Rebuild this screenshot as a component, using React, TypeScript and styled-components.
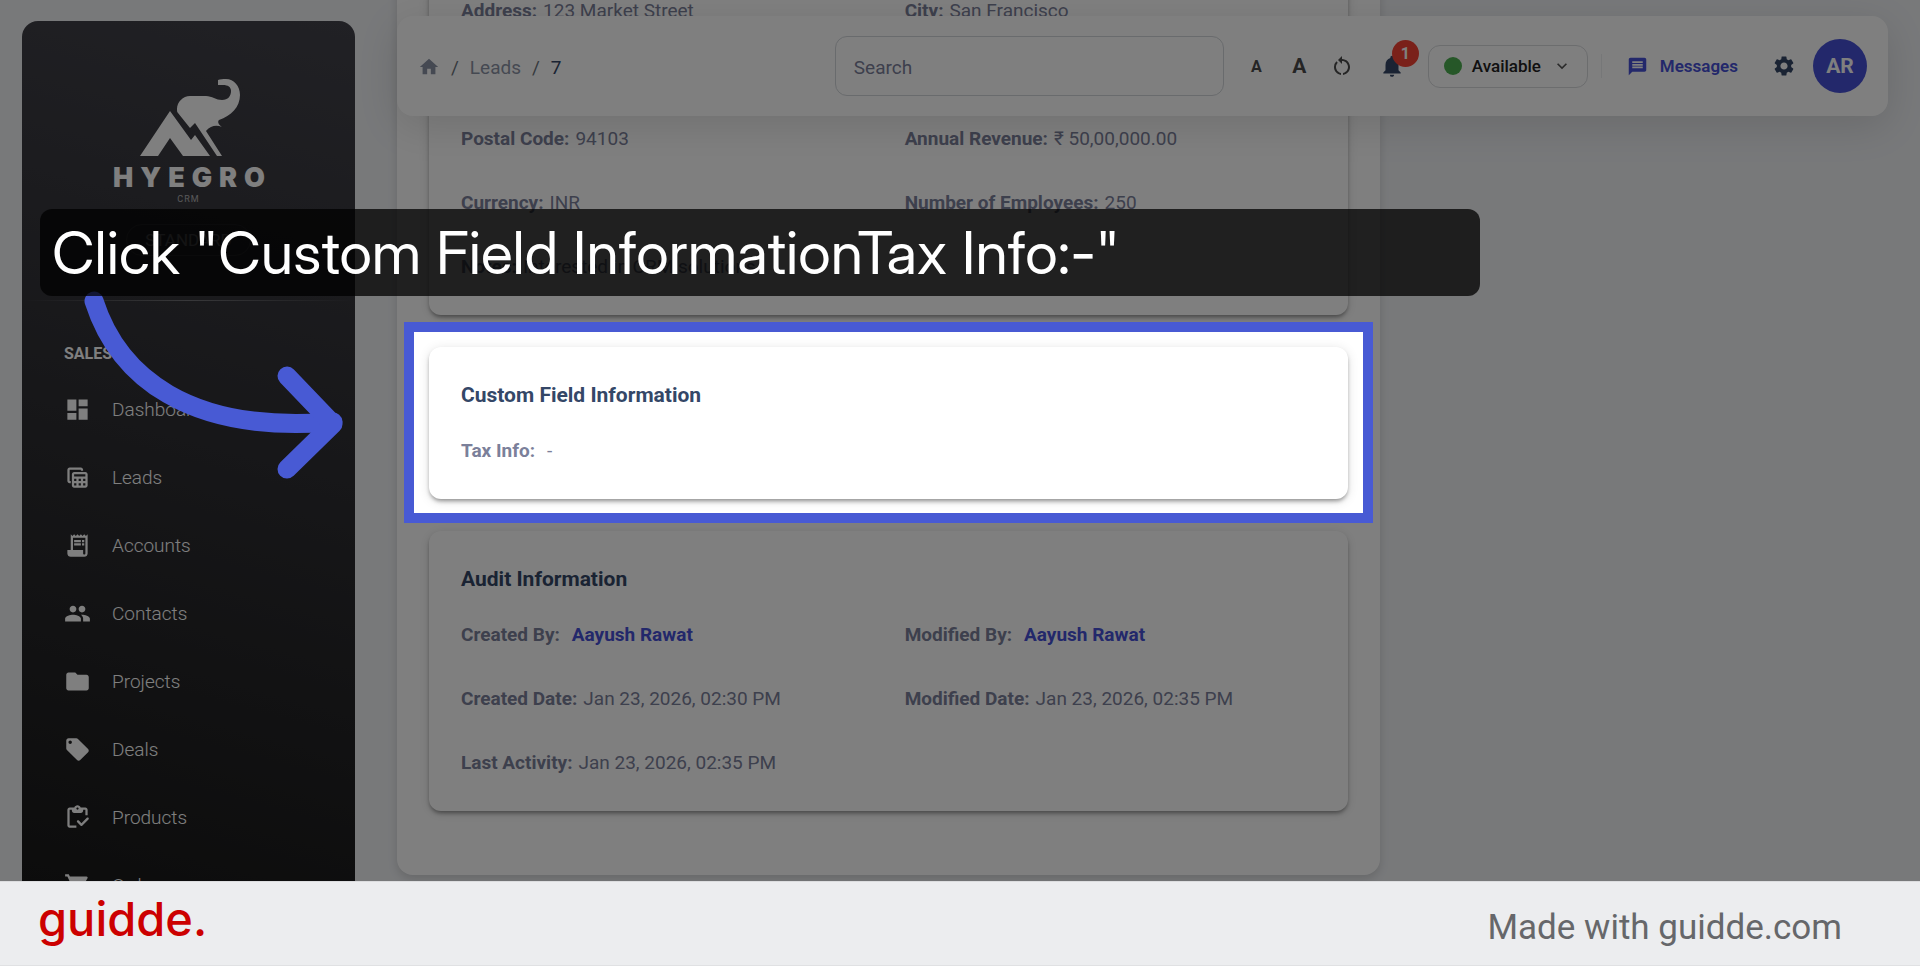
import React from "react";
import styled, { createGlobalStyle } from "styled-components";
import {
  MdDashboard,
  MdFolder,
  MdHome,
  MdKeyboardArrowDown,
  MdLocalOffer,
  MdMessage,
  MdNotifications,
  MdPeople,
  MdReceiptLong,
  MdRestartAlt,
  MdSettings,
  MdShoppingCart,
  MdTableView,
} from "react-icons/md";

const INK = "#344767";
const MUTED = "#7b809a";
const ACCENT = "#4650d6";
const MARKER = "#485ad4";

const GlobalStyle = createGlobalStyle`
  *, *::before, *::after { box-sizing: border-box; }
  body {
    margin: 0;
    background: #f0f2f5;
    font-family: Roboto, "Open Sans", sans-serif;
  }
  a { color: inherit; text-decoration: none; }
  button { font: inherit; color: inherit; border: 0; background: none; padding: 0; cursor: pointer; }
`;

const Page = styled.div`
  display: flex;
  flex-direction: column;
  height: 100vh;
`;

const Stage = styled.div`
  position: relative;
  display: flex;
  flex: 1;
  min-height: 0;
  overflow: hidden;
  background: #f0f2f5;
`;

/* ---------- sidebar ---------- */

const Sidebar = styled.aside`
  flex: none;
  width: 333px;
  margin: 21px 0 0 22px;
  border-radius: 16px 16px 0 0;
  background: linear-gradient(195deg, #42424a, #191919);
  color: #fff;
  overflow: hidden;
`;

const Brand = styled.div`
  display: flex;
  flex-direction: column;
  align-items: center;
  height: 279px;
  padding-top: 58px;
`;

const BrandName = styled.div`
  margin-top: 5px;
  padding-left: 8px;
  font: 900 27px/32px Inter, sans-serif;
  letter-spacing: 7px;
`;

const BrandSub = styled.div`
  font-size: 9px;
  line-height: 10px;
  letter-spacing: 1px;
  opacity: 0.6;
`;

const Plan = styled.div`
  margin-top: 20px;
  padding: 0 18px;
  border: 1px solid rgba(255, 255, 255, 0.3);
  border-radius: 16px;
  font-size: 17px;
  line-height: 30px;
  opacity: 0.5;
`;

const Divider = styled.hr`
  width: 100%;
  height: 1px;
  margin: 0;
  border: 0;
  background: linear-gradient(to right, transparent, rgba(255, 255, 255, 0.3), transparent);
`;

const NavHeading = styled.h2`
  margin: 41px 0 9px;
  padding-left: 42px;
  font-size: 16px;
  font-weight: 700;
  line-height: 24px;
`;

const NavItem = styled.a`
  display: flex;
  align-items: center;
  gap: 21px;
  height: 68px;
  padding-left: 42px;
  font-size: 19px;
  font-weight: 300;

  svg { width: 27px; height: 27px; }
`;

/* ---------- top bar ---------- */

const Main = styled.main`
  position: relative;
  flex: 1;
  min-width: 0;
  margin: 0 32px 0 42px;
  display: flex;
  flex-direction: column;
  justify-content: flex-end;
  padding-bottom: 6px;
`;

const TopBar = styled.header`
  position: absolute;
  z-index: 2;
  top: 16px;
  left: 0;
  right: 0;
  display: flex;
  align-items: center;
  height: 100px;
  padding: 0 21px;
  border-radius: 16px;
  background: #fff;
  box-shadow: 0 10px 40px rgba(0, 0, 0, 0.12);
  color: ${INK};
`;

const Crumbs = styled.nav`
  display: flex;
  align-items: center;
  gap: 11px;
  margin-right: auto;
  padding-top: 2px;
  font-size: 19px;
  color: #6c757d;

  svg { display: block; width: 22px; height: 22px; }
  a { color: #8b93a5; }
  strong { font-weight: 400; color: ${INK}; }
`;

const Search = styled.input`
  width: 389px;
  height: 60px;
  margin-right: 11px;
  padding: 2px 18px 0;
  border: 1px solid #d2d6da;
  border-radius: 12px;
  background: #fff;
  font: 400 19px Roboto, sans-serif;
  &::placeholder { color: ${MUTED}; opacity: 1; }
`;

const IconButton = styled.button<{ $size: number }>`
  position: relative;
  display: flex;
  align-items: center;
  justify-content: center;
  width: 43px;
  height: 43px;
  font-size: ${(p) => p.$size}px;
  font-weight: 700;
  color: #4a4a4a;
`;

const BellButton = styled(IconButton)`
  margin-left: 7px;
  color: ${INK};
`;

const Badge = styled.span`
  position: absolute;
  top: -5px;
  left: 21px;
  width: 27px;
  height: 27px;
  border-radius: 50%;
  background: #f44335;
  color: #fff;
  font-size: 16px;
  line-height: 27px;
  text-align: center;
`;

const Status = styled.button`
  display: flex;
  align-items: center;
  gap: 10px;
  width: 160px;
  height: 43px;
  margin-left: 14px;
  padding: 0 15px;
  border: 1px solid #d8dadd;
  border-radius: 12px;
  font-size: 17px;
  font-weight: 500;
  color: #222;

  svg { margin-left: auto; width: 20px; height: 20px; color: #555; }
`;

const Dot = styled.span`
  width: 18px;
  height: 18px;
  border-radius: 50%;
  background: #4caf50;
`;

const BarRule = styled.span`
  width: 1px;
  height: 24px;
  margin: 0 25px 0 13px;
  background: #eceef0;
`;

const MessagesLink = styled.a`
  display: flex;
  align-items: center;
  gap: 12px;
  margin-right: 34px;
  font-size: 17px;
  font-weight: 600;
  color: ${ACCENT};

  svg { width: 21px; height: 21px; }
`;

const SettingsButton = styled.button`
  display: flex;
  margin-right: 17px;
  font-size: 24px;
`;

const Avatar = styled.button`
  width: 54px;
  height: 54px;
  border-radius: 50%;
  background: ${ACCENT};
  color: #fff;
  font-size: 21px;
  font-weight: 700;
`;

/* ---------- record details ---------- */

const Columns = styled.div`
  display: grid;
  grid-template-columns: 2fr 1fr;
  gap: 16px;
`;

const Panel = styled.section`
  display: flex;
  flex-direction: column;
  gap: 32px;
  padding: 32px 32px 64px;
  border-radius: 16px;
  background: #fff;
  box-shadow: 0 4px 10px rgba(0, 0, 0, 0.14);
`;

const CardFrame = styled.div`
  position: relative;
`;

const Card = styled.section`
  padding: 32px 32px 17px;
  border-radius: 12px;
  background: #fff;
  box-shadow: 0 3px 4px -1px rgba(0, 0, 0, 0.4), 0 2px 12px rgba(0, 0, 0, 0.12);
`;

const CardTitle = styled.h3`
  margin: 0 0 7px;
  font-size: 21px;
  font-weight: 700;
  line-height: 32px;
  color: ${INK};
`;

const Fields = styled.dl`
  display: grid;
  grid-template-columns: 1fr 1fr;
  grid-auto-rows: 64px;
  column-gap: 32px;
  margin: 0;
`;

const FieldRow = styled.div<{ $wide?: boolean; $spaced?: boolean }>`
  display: flex;
  align-items: center;
  gap: ${(p) => (p.$spaced ? 12 : 6)}px;
  ${(p) => (p.$wide ? "grid-column: 1 / -1;" : "")}
  font-size: 19px;
  color: ${MUTED};

  dt { font-weight: 700; }
  dd { margin: 0; }
  a { font-weight: 700; color: ${ACCENT}; }
`;

const BehindBar = styled.div`
  grid-column: 1 / -1;
`;

/* ---------- walkthrough overlay ---------- */

const Spotlight = styled.div`
  position: absolute;
  z-index: 5;
  inset: -25px -25px -24px;
  border: 10px solid ${MARKER};
  box-shadow: 0 0 0 3000px rgba(0, 0, 0, 0.5);
  pointer-events: none;
`;

const Arrow = styled.svg`
  position: absolute;
  z-index: 6;
  top: 280px;
  left: 80px;
  width: 270px;
  height: 210px;
  fill: none;
  stroke: ${MARKER};
  stroke-width: 19;
  stroke-linecap: round;
  stroke-linejoin: round;
`;

const Caption = styled.div`
  position: absolute;
  z-index: 7;
  top: 209px;
  left: 40px;
  width: 75%;
  padding: 1px 12px 0;
  border-radius: 12px;
  background: rgba(0, 0, 0, 0.75);
  color: #fff;
  font: 400 59px/86px "Inter Display", Inter, sans-serif;
  white-space: nowrap;
`;

const Footer = styled.footer`
  flex: none;
  display: flex;
  align-items: center;
  justify-content: space-between;
  height: 85px;
  padding: 0 78px 0 38px;
  border-top: 1px solid #dcdddf;
  border-bottom: 1px solid #e0e1e3;
  background: #ecedef;
`;

const Wordmark = styled.a`
  padding-bottom: 10px;
  font: 500 47px/56px Inter, sans-serif;
  color: #cc0000;
`;

const Credit = styled.span`
  padding-top: 8px;
  font-size: 35px;
  line-height: 40px;
  color: #66676a;
`;

function ClipboardCheck() {
  return (
    <svg viewBox="0 0 24 24" fill="currentColor" aria-hidden="true">
      <path d="M5 5h2v1c0 1.1.9 2 2 2h6c1.1 0 2-.9 2-2V5h2v5h2V5c0-1.1-.9-2-2-2h-4.18C14.4 1.84 13.3 1 12 1s-2.4.84-2.82 2H5c-1.1 0-2 .9-2 2v14c0 1.1.9 2 2 2h6v-2H5V5zm7-2c.55 0 1 .45 1 1s-.45 1-1 1-1-.45-1-1 .45-1 1-1z" />
      <path d="M21.75 12.25c-.41-.41-1.09-.41-1.5 0L15.51 17l-2.26-2.25c-.41-.41-1.08-.41-1.5 0-.41.41-.41 1.09 0 1.5l3.05 3.04c.39.39 1.02.39 1.41 0l5.53-5.54c.42-.41.42-1.09.01-1.5z" />
    </svg>
  );
}

const NAV = [
  { label: "Dashboard", Icon: MdDashboard },
  { label: "Leads", Icon: MdTableView },
  { label: "Accounts", Icon: MdReceiptLong },
  { label: "Contacts", Icon: MdPeople },
  { label: "Projects", Icon: MdFolder },
  { label: "Deals", Icon: MdLocalOffer },
  { label: "Products", Icon: ClipboardCheck },
  { label: "Orders", Icon: MdShoppingCart },
];

type FieldProps = { label: string; value: string; wide?: boolean; spaced?: boolean; link?: boolean };

function Field({ label, value, wide, spaced, link }: FieldProps) {
  return (
    <FieldRow $wide={wide} $spaced={spaced}>
      <dt>{label}:</dt>
      <dd>{link ? <a href="#user">{value}</a> : value}</dd>
    </FieldRow>
  );
}

function ElephantMark() {
  return (
    <svg width="106" height="78" viewBox="-4 0 106 78" fill="#fff" aria-hidden="true">
      <path d="M0 77 L30 32 L51 61 L55 56 L70 77 H43 L30 59 L18 77 Z" />
      <path d="M37 30 C37 23 43 17 50 17 H66 C72 17 76 21 82 21 C88 21 91 17 91 12 C91 8 88 6 83 6 L78 6 V1 C80 0 83 0 86 0 C94 0 100 7 100 16 C100 28 91 37 79 41 C77 43 79 46 82 48 C77 46 71 46 66 52 L82 77 H77 L55 44 L50 49 L38 34 C37 33 37 32 37 30 Z" />
    </svg>
  );
}

export default function App() {
  return (
    <Page>
      <GlobalStyle />
      <Stage>
        <Sidebar>
          <Brand>
            <ElephantMark />
            <BrandName>HYEGRO</BrandName>
            <BrandSub>CRM</BrandSub>
            <Plan>STANDARD</Plan>
          </Brand>
          <Divider />
          <NavHeading>SALES</NavHeading>
          <nav>
            {NAV.map(({ label, Icon }) => (
              <NavItem key={label} href="#nav">
                <Icon />
                {label}
              </NavItem>
            ))}
          </nav>
        </Sidebar>

        <Main>
          <TopBar>
            <Crumbs aria-label="Breadcrumb">
              <a href="#home" aria-label="Home"><MdHome /></a>
              <span>/</span>
              <a href="#leads">Leads</a>
              <span>/</span>
              <strong>7</strong>
            </Crumbs>
            <Search type="search" placeholder="Search" aria-label="Search" />
            <IconButton $size={16} aria-label="Smaller text">A</IconButton>
            <IconButton $size={21} aria-label="Larger text">A</IconButton>
            <IconButton $size={24} aria-label="Reset text size"><MdRestartAlt /></IconButton>
            <BellButton $size={26} aria-label="Notifications">
              <MdNotifications />
              <Badge>1</Badge>
            </BellButton>
            <Status>
              <Dot />
              Available
              <MdKeyboardArrowDown />
            </Status>
            <BarRule />
            <MessagesLink href="#messages">
              <MdMessage />
              Messages
            </MessagesLink>
            <SettingsButton aria-label="Settings"><MdSettings /></SettingsButton>
            <Avatar>AR</Avatar>
          </TopBar>

          <Columns>
            <Panel>
              <Card>
                <Fields>
                  <Field label="Address" value="123 Market Street" />
                  <Field label="City" value="San Francisco" />
                  <BehindBar />
                  <Field label="Postal Code" value="94103" />
                  <Field label="Annual Revenue" value="₹ 50,00,000.00" />
                  <Field label="Currency" value="INR" />
                  <Field label="Number of Employees" value="250" />
                  <Field label="Notes" value="Interested in CRM solutions" wide />
                </Fields>
              </Card>
              <CardFrame>
                <Card>
                  <CardTitle>Custom Field Information</CardTitle>
                  <Fields>
                    <Field label="Tax Info" value="-" spaced />
                  </Fields>
                </Card>
                <Spotlight />
              </CardFrame>
              <Card>
                <CardTitle>Audit Information</CardTitle>
                <Fields>
                  <Field label="Created By" value="Aayush Rawat" spaced link />
                  <Field label="Modified By" value="Aayush Rawat" spaced link />
                  <Field label="Created Date" value="Jan 23, 2026, 02:30 PM" />
                  <Field label="Modified Date" value="Jan 23, 2026, 02:35 PM" />
                  <Field label="Last Activity" value="Jan 23, 2026, 02:35 PM" />
                </Fields>
              </Card>
            </Panel>
          </Columns>
        </Main>

        <Arrow viewBox="80 280 270 210" aria-hidden="true">
          <path d="M94 301 C118 376 188 434 333 422" />
          <path d="M287 376 L333 424 L287 469" />
        </Arrow>
        <Caption>Click "Custom Field InformationTax Info:-"</Caption>
      </Stage>

      <Footer>
        <Wordmark href="#guidde">guidde.</Wordmark>
        <Credit>Made with guidde.com</Credit>
      </Footer>
    </Page>
  );
}
